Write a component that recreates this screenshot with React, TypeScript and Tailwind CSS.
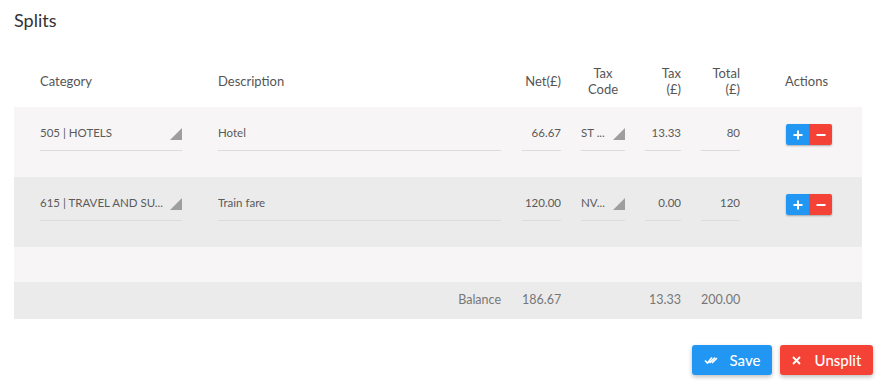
import React from "react";

const font = { fontFamily: "Lato, 'Noto Sans', sans-serif" };

function Tri({ className = "" }: { className?: string }) {
  return (
    <svg width="12" height="12" viewBox="0 0 12 12" className={className}>
      <polygon points="12,0 12,12 0,12" fill="#9e9e9e" />
    </svg>
  );
}

function Field({ text, align = "left", select = false, w }: { text: string; align?: "left" | "right"; select?: boolean; w: string }) {
  return (
    <div className={`${w} h-[27px] border-b border-[#dcdcdc] flex items-start`}>
      <div className={`flex-1 leading-[18px] text-[11.5px] text-[#5a5a5a] whitespace-nowrap overflow-hidden ${align === "right" ? "text-right" : "text-left"}`}>{text}</div>
      {select && <Tri className="mt-[4px] shrink-0" />}
    </div>
  );
}

function Actions() {
  return (
    <div className="flex h-[21px] rounded-[2px] overflow-hidden shadow-[0_1px_2px_rgba(0,0,0,0.3)] w-[46px]">
      <div className="w-[23px] bg-[#2196f3] flex items-center justify-center">
        <svg width="10" height="10" viewBox="0 0 10 10"><path d="M5 0.5v9M0.5 5h9" stroke="#fff" strokeWidth="2" /></svg>
      </div>
      <div className="w-[23px] bg-[#f44336] flex items-center justify-center">
        <svg width="10" height="10" viewBox="0 0 10 10"><path d="M0.5 5h9" stroke="#fff" strokeWidth="2" /></svg>
      </div>
    </div>
  );
}

const cols = "grid grid-cols-[204px_304px_59px_64px_56px_59px_102px]";

function Row({ bg, cat, desc, net, code, tax, total }: any) {
  return (
    <div className={`${cols} h-[70px] ${bg}`}>
      <div className="pl-[26px] pt-[17px]"><Field text={cat} select w="w-[142px]" /></div>
      <div className="pt-[17px]"><Field text={desc} w="w-[283px]" /></div>
      <div className="pt-[17px]"><Field text={net} align="right" w="w-[39px]" /></div>
      <div className="pt-[17px]"><Field text={code} select w="w-[44px]" /></div>
      <div className="pt-[17px]"><Field text={tax} align="right" w="w-[36px]" /></div>
      <div className="pt-[17px]"><Field text={total} align="right" w="w-[39px]" /></div>
      <div className="pt-[17px] pl-[26px]"><Actions /></div>
    </div>
  );
}

export default function App() {
  return (
    <div className="w-[885px] h-[389px] bg-white" style={font}>
      <div className="pl-[14px] pr-[23px] pt-[10px]">
        <h2 className="text-[18px] leading-[20px] text-[#333]">Splits</h2>
        <div className={`${cols} h-[52px] mt-[25px] text-[13px] text-[#555] leading-[16px] items-center`}>
          <div className="pl-[26px]">Category</div>
          <div>Description</div>
          <div className="w-[39px] text-right">Net(£)</div>
          <div className="w-[44px] text-center">Tax<br />Code</div>
          <div className="w-[36px] text-right">Tax<br />(£)</div>
          <div className="w-[39px] text-right">Total<br />(£)</div>
          <div className="pl-[25px]">Actions</div>
        </div>
        <Row bg="bg-[#f7f5f6]" cat="505 | HOTELS" desc="Hotel" net="66.67" code="ST ..." tax="13.33" total="80" />
        <Row bg="bg-[#ebebeb]" cat="615 | TRAVEL AND SU..." desc="Train fare" net="120.00" code="NV..." tax="0.00" total="120" />
        <div className="h-[35px] bg-[#f7f5f6]" />
        <div className={`${cols} h-[37px] bg-[#ebebeb] items-center text-[12.5px] text-[#777]`}>
          <div />
          <div className="w-[283px] text-right">Balance</div>
          <div className="w-[39px] text-right">186.67</div>
          <div />
          <div className="w-[36px] text-right">13.33</div>
          <div className="w-[39px] text-right">200.00</div>
          <div />
        </div>
      </div>
      <div className="flex justify-end gap-[8px] pr-[12px] mt-[26px]">
        <button className="w-[80px] h-[30px] rounded-[3px] bg-[#2196f3] text-white text-[15px] font-medium flex items-center justify-center gap-[12px] shadow-[0_2px_4px_rgba(0,0,0,0.25)]">
          <svg width="14" height="10" viewBox="0 0 14 10"><path d="M1 5.5l2.5 2.5L8 2.5M5.5 8L11 2.5M8 8l5-5" stroke="#fff" strokeWidth="1.6" fill="none" /></svg>
          <span>Save</span>
        </button>
        <button className="w-[93px] h-[30px] rounded-[3px] bg-[#f44336] text-white text-[15px] font-medium flex items-center justify-center gap-[14px] shadow-[0_2px_4px_rgba(0,0,0,0.25)]">
          <svg width="9" height="9" viewBox="0 0 9 9"><path d="M1 1l7 7M8 1L1 8" stroke="#fff" strokeWidth="1.8" /></svg>
          <span>Unsplit</span>
        </button>
      </div>
    </div>
  );
}
